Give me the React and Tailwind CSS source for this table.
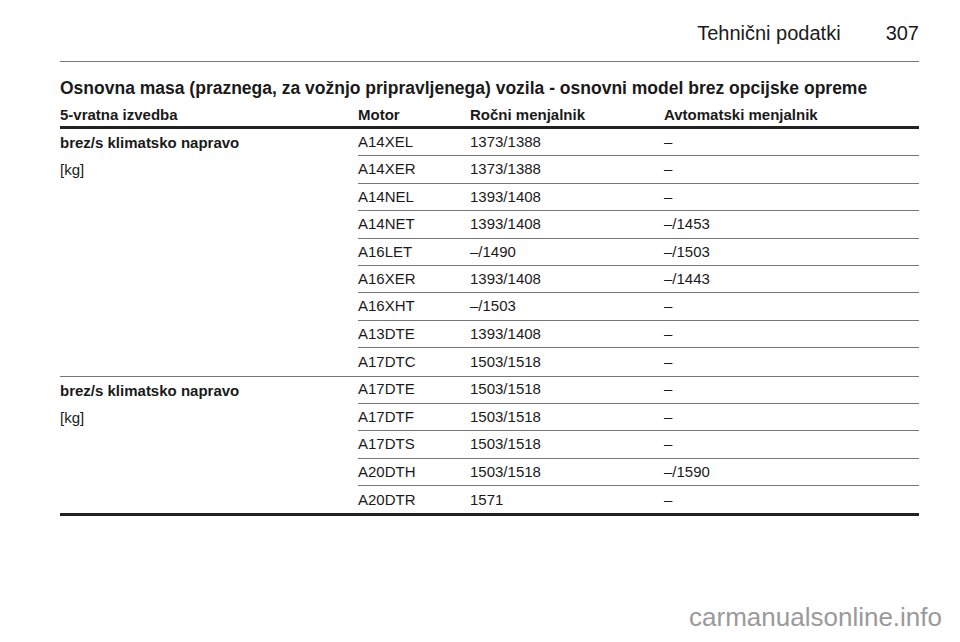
const group1 = [
  ["A14XEL", "1373/1388", "–"],
  ["A14XER", "1373/1388", "–"],
  ["A14NEL", "1393/1408", "–"],
  ["A14NET", "1393/1408", "–/1453"],
  ["A16LET", "–/1490", "–/1503"],
  ["A16XER", "1393/1408", "–/1443"],
  ["A16XHT", "–/1503", "–"],
  ["A13DTE", "1393/1408", "–"],
  ["A17DTC", "1503/1518", "–"],
];

const group2 = [
  ["A17DTE", "1503/1518", "–"],
  ["A17DTF", "1503/1518", "–"],
  ["A17DTS", "1503/1518", "–"],
  ["A20DTH", "1503/1518", "–/1590"],
  ["A20DTR", "1571", "–"],
];

function Group({ rows, last }) {
  return (
    <div
      className={
        "flex " +
        (last ? "border-b-[3px] border-[#222]" : "border-b border-[#777]")
      }
    >
      <div className="w-[298px] shrink-0 leading-[27.4px]">
        <div className="font-bold">brez/s klimatsko napravo</div>
        <div>[kg]</div>
      </div>
      <div className="flex-1">
        {rows.map((r, i) => (
          <div
            key={r[0]}
            className={
              "flex h-[27.4px] items-center " +
              (i < rows.length - 1 ? "border-b border-[#777]" : "")
            }
          >
            <div className="w-[112px]">{r[0]}</div>
            <div className="w-[194px]">{r[1]}</div>
            <div>{r[2]}</div>
          </div>
        ))}
      </div>
    </div>
  );
}

export default function App() {
  return (
    <main
      className="h-[642px] w-[960px] overflow-hidden bg-white text-[#1a1a1a]"
      style={{ fontFamily: '"Liberation Sans", Arial, sans-serif' }}
    >
      <div className="ml-[60px] w-[859px] pt-[18px]">
        <div className="flex justify-end gap-[45px] border-b border-[#777] pb-[13px] text-[20px] leading-[30px]">
          <span>Tehnični podatki</span>
          <span>307</span>
        </div>
        <h1 className="mt-[14px] text-[17.5px] font-bold leading-[24px]">
          Osnovna masa (praznega, za vožnjo pripravljenega) vozila - osnovni model brez opcijske opreme
        </h1>
        <div className="text-[15px]">
          <div className="mt-[4px] flex h-[25px] items-center border-b-[3px] border-[#222] font-bold">
            <div className="w-[298px]">5-vratna izvedba</div>
            <div className="w-[112px]">Motor</div>
            <div className="w-[194px]">Ročni menjalnik</div>
            <div>Avtomatski menjalnik</div>
          </div>
          <Group rows={group1} />
          <Group rows={group2} last />
        </div>
      </div>
      <div className="mt-[86px] pr-[18px] text-right text-[26px] leading-[30px] text-[#9a9a9a]">
        carmanualsonline.info
      </div>
    </main>
  );
}
